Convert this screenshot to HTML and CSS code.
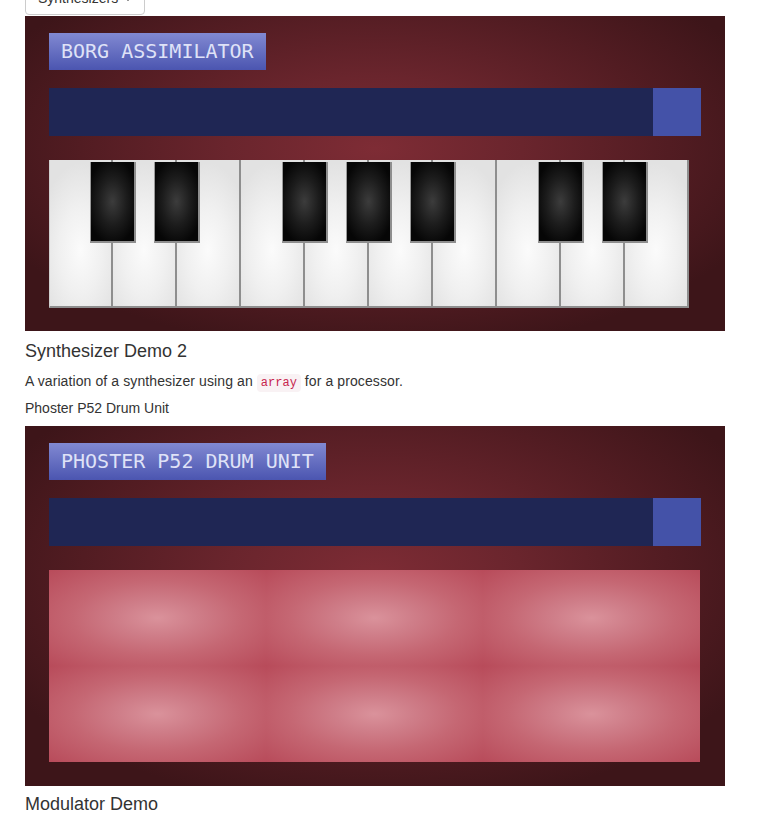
FILE: index.html
```html
<!DOCTYPE html>
<html>
<head>
<meta charset="utf-8">
<link rel="stylesheet" href="styles.css">
</head>
<body>
<div class="page">
  <div class="dropdown">
    <button class="btn">Synthesizers <span class="caret"></span></button>
  </div>

  <div class="synth">
    <div class="label">BORG ASSIMILATOR</div>
    <div class="bar"><div class="knob"></div></div>
    <div class="keyboard">
      <div class="white"><div class="black"></div></div>
      <div class="white"><div class="black"></div></div>
      <div class="white"></div>
      <div class="white"><div class="black"></div></div>
      <div class="white"><div class="black"></div></div>
      <div class="white"><div class="black"></div></div>
      <div class="white"></div>
      <div class="white"><div class="black"></div></div>
      <div class="white"><div class="black"></div></div>
      <div class="white"></div>
    </div>
  </div>

  <h4 class="title first">Synthesizer Demo 2</h4>
  <p class="desc">A variation of a synthesizer using an <code>array</code> for a processor.</p>
  <p class="sub">Phoster P52 Drum Unit</p>

  <div class="synth drum">
    <div class="label">PHOSTER P52 DRUM UNIT</div>
    <div class="bar"><div class="knob"></div></div>
    <div class="pads">
      <div class="pad"></div>
      <div class="pad"></div>
      <div class="pad"></div>
      <div class="pad"></div>
      <div class="pad"></div>
      <div class="pad"></div>
    </div>
  </div>

  <h4 class="title second">Modulator Demo</h4>
</div>
</body>
</html>
```

FILE: styles.css
```css
html, body {
  margin: 0;
  padding: 0;
  background: #fff;
}

body {
  font-family: "Liberation Sans", Helvetica, Arial, sans-serif;
  font-size: 14px;
  color: #333;
  overflow: hidden;
}

.page {
  padding: 0 25px;
  margin-top: -19px;
}

.dropdown {
  display: flex;
  margin-bottom: 1px;
}

.btn {
  box-sizing: border-box;
  height: 34px;
  padding: 6px 12px;
  border: 1px solid #ccc;
  border-radius: 4px;
  background: #fff;
  color: #333;
  font-family: "Liberation Sans", Helvetica, Arial, sans-serif;
  font-size: 14px;
  line-height: 20px;
}

.caret {
  display: inline-block;
  width: 0;
  height: 0;
  margin-left: 2px;
  vertical-align: middle;
  border-top: 4px solid #333;
  border-left: 4px solid transparent;
  border-right: 4px solid transparent;
}

.synth {
  box-sizing: border-box;
  width: 700px;
  height: 315px;
  padding: 17px 24px 0 24px;
  display: flex;
  flex-direction: column;
  align-items: flex-start;
  background: radial-gradient(ellipse 60% 65% at 50% 42%, #7e2c35 0%, #6a252d 35%, #521c22 70%, #3d1519 100%);
}

.synth.drum {
  height: 360px;
}

.label {
  height: 37px;
  line-height: 37px;
  padding: 0 12px 0 12px;
  font-family: "DejaVu Sans Mono", "Liberation Mono", monospace;
  font-size: 20px;
  color: #dfe2f7;
  background: linear-gradient(#8189d2, #4b55b0);
}

.bar {
  margin-top: 18px;
  width: 652px;
  height: 48px;
  background: #1f2654;
  display: flex;
  justify-content: flex-end;
}

.knob {
  width: 48px;
  height: 48px;
  background: #4452a8;
}

.keyboard {
  margin-top: 24px;
  display: flex;
  height: 148px;
}

.white {
  position: relative;
  box-sizing: border-box;
  width: 64px;
  height: 148px;
  border-right: 2px solid #8e8e8e;
  border-bottom: 2px solid #8e8e8e;
  background: radial-gradient(ellipse 70% 60% at 50% 62%, #fbfbfb 0%, #f0f0f0 50%, #e2e2e2 100%);
}

.white:first-child {
  border-left: 1px solid #cfcfcf;
}

.black {
  position: absolute;
  z-index: 1;
  top: 2px;
  right: -25px;
  box-sizing: border-box;
  width: 46px;
  height: 81px;
  border-left: 1px solid #9a9a9a;
  border-right: 2px solid #8e8e8e;
  border-bottom: 2px solid #8e8e8e;
  background: radial-gradient(ellipse 60% 55% at 50% 50%, #3c3c3c 0%, #1c1c1c 55%, #060606 100%);
}

.pads {
  margin-top: 24px;
  width: 651px;
  height: 192px;
  display: grid;
  grid-template-columns: repeat(3, 1fr);
  grid-template-rows: repeat(2, 1fr);
}

.pad {
  background: radial-gradient(ellipse at center, #da929b 0%, #cf7e89 25%, #c56773 55%, #b84b5a 100%);
}

.title {
  margin: 0;
  font-size: 18px;
  font-weight: normal;
  line-height: 20px;
  color: #333;
}

.title.first {
  margin-top: 10px;
}

.title.second {
  margin-top: 8px;
}

.desc {
  margin: 10px 0 0 0;
  font-size: 14px;
  line-height: 20px;
  letter-spacing: 0.1px;
}

.desc code {
  font-family: "Liberation Mono", "DejaVu Sans Mono", monospace;
  font-size: 12px;
  line-height: 14px;
  padding: 2px 4px;
  color: #c7254e;
  background: #f9f2f4;
  border-radius: 4px;
  letter-spacing: 0;
}

.sub {
  margin: 7px 0 8px 0;
  font-size: 14px;
  line-height: 20px;
}
```
